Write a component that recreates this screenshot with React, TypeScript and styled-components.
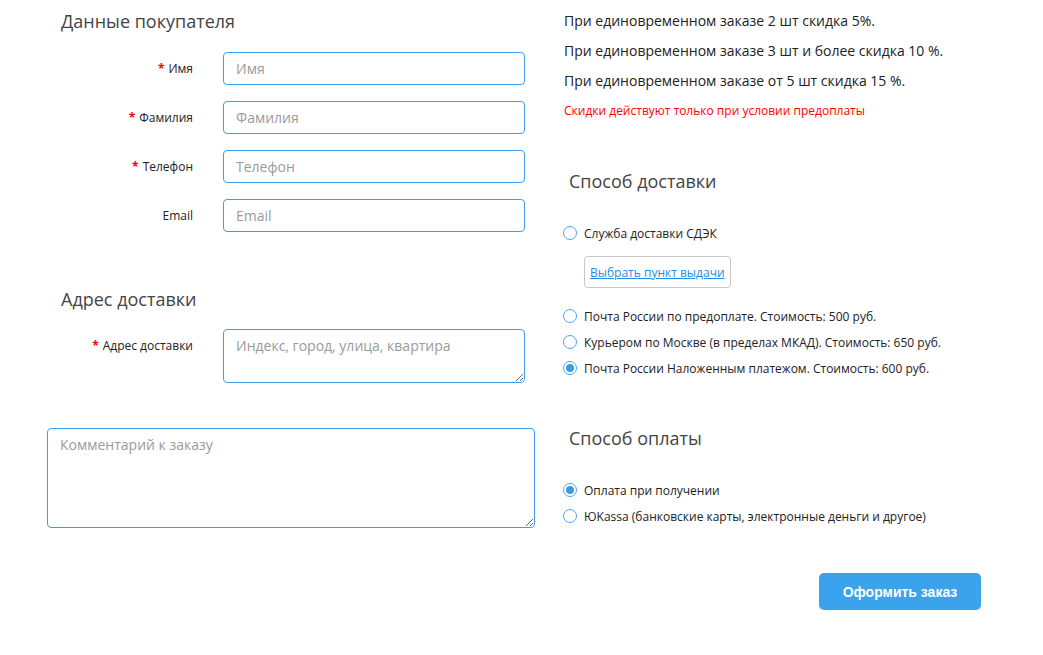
import styled, { createGlobalStyle } from 'styled-components'

const GlobalStyle = createGlobalStyle`
    body {
        margin: 0;
        background: #fff;
        font-family: "Open Sans", "Liberation Sans", sans-serif;
        color: #222;
    }
`

const Page = styled.div`
    display: grid;
    grid-template-columns: 488px 418px;
    column-gap: 28px;
    padding-left: 47px;
`

const Column = styled.div`
    display: flex;
    flex-direction: column;
`

const Heading = styled.h2<{ $top: number; $indent: number }>`
    margin: ${p => p.$top}px 0 0;
    padding-left: ${p => p.$indent}px;
    font-size: 18px;
    line-height: 24px;
    font-weight: 400;
    color: #444;
`

const Fields = styled.div<{ $top: number }>`
    display: flex;
    flex-direction: column;
    gap: 16px;
    margin-top: ${p => p.$top}px;
`

const Row = styled.div`
    display: grid;
    grid-template-columns: 146px 302px;
    column-gap: 30px;
    align-items: start;
`

const Label = styled.label`
    text-align: right;
    font-size: 12px;
    line-height: 17px;
    padding-top: 8px;
    color: #222;
`

const Star = styled.span`
    color: #f00;
    font-weight: 700;
    margin-right: 4px;
`

const fieldBase = `
    box-sizing: border-box;
    width: 100%;
    border: 1px solid #3d9fec;
    border-radius: 4px;
    font-family: "Open Sans", "Liberation Sans", sans-serif;
    font-size: 14px;
    color: #222;
    outline: none;
    background: #fff;
    &::placeholder { color: #9a9a9a; }
`

const Input = styled.input`
    ${fieldBase}
    height: 33px;
    padding: 0 12px;
`

const TextArea = styled.textarea<{ $h: number }>`
    ${fieldBase}
    height: ${p => p.$h}px;
    padding: 6px 12px;
    line-height: 19px;
    display: block;
    resize: vertical;
`

const Comment = styled(TextArea)`
    margin-top: 45px;
`

const Notes = styled.div`
    margin-top: 6px;
`

const Note = styled.p`
    margin: 0;
    font-size: 14px;
    line-height: 30px;
    color: #222;
    padding-left: 1px;
`

const Warning = styled.p`
    margin: 0;
    font-size: 12px;
    line-height: 30px;
    color: #f00;
    padding-left: 1px;
`

const Options = styled.div<{ $top: number }>`
    display: flex;
    flex-direction: column;
    margin-top: ${p => p.$top}px;
`

const Option = styled.label`
    display: flex;
    align-items: center;
    gap: 7px;
    height: 26px;
    font-size: 12px;
    color: #222;
`

const Radio = styled.span<{ $checked?: boolean }>`
    box-sizing: border-box;
    width: 14px;
    height: 14px;
    border-radius: 50%;
    border: 1px solid #4ba6ef;
    display: flex;
    align-items: center;
    justify-content: center;
    flex: none;

    &::after {
        content: '';
        width: 8px;
        height: 8px;
        border-radius: 50%;
        background: ${p => (p.$checked ? '#3a9be9' : 'transparent')};
    }
`

const PickupBox = styled.div`
    margin: 10px 0 15px 21px;
    align-self: flex-start;
    box-sizing: border-box;
    height: 32px;
    padding: 0 5px;
    border: 1px solid #c8c8c8;
    border-radius: 4px;
    display: flex;
    align-items: center;
`

const PickupLink = styled.a`
    font-size: 12px;
    color: #1f8ee6;
    text-decoration: underline;
    cursor: pointer;
`

const Submit = styled.button`
    align-self: flex-end;
    margin-top: 44px;
    width: 162px;
    height: 37px;
    border: none;
    border-radius: 5px;
    background: #3ba2ec;
    color: #fff;
    font-family: "Liberation Sans", Arial, sans-serif;
    font-weight: 700;
    font-size: 14px;
    cursor: pointer;
`

const buyerFields = [
    { name: 'Имя', required: true },
    { name: 'Фамилия', required: true },
    { name: 'Телефон', required: true },
    { name: 'Email', required: false },
]

const delivery = [
    'Почта России по предоплате. Стоимость: 500 руб.',
    'Курьером по Москве (в пределах МКАД). Стоимость: 650 руб.',
    'Почта России Наложенным платежом. Стоимость: 600 руб.',
]

const App = () => {
    return (
        <>
            <GlobalStyle />
            <Page>
                <Column>
                    <Heading $top={9} $indent={14}>Данные покупателя</Heading>
                    <Fields $top={19}>
                        {buyerFields.map(f => (
                            <Row key={f.name}>
                                <Label>
                                    {f.required && <Star>*</Star>}
                                    {f.name}
                                </Label>
                                <Input placeholder={f.name} />
                            </Row>
                        ))}
                    </Fields>
                    <Heading $top={55} $indent={14}>Адрес доставки</Heading>
                    <Fields $top={18}>
                        <Row>
                            <Label>
                                <Star>*</Star>Адрес доставки
                            </Label>
                            <TextArea $h={54} placeholder="Индекс, город, улица, квартира" />
                        </Row>
                    </Fields>
                    <Comment $h={100} placeholder="Комментарий к заказу" />
                </Column>

                <Column>
                    <Notes>
                        <Note>При единовременном заказе 2 шт скидка 5%.</Note>
                        <Note>При единовременном заказе 3 шт и более скидка 10 %.</Note>
                        <Note>При единовременном заказе от 5 шт скидка 15 %.</Note>
                        <Warning>Скидки действуют только при условии предоплаты</Warning>
                    </Notes>

                    <Heading $top={43} $indent={6}>Способ доставки</Heading>
                    <Options $top={27}>
                        <Option>
                            <Radio />
                            Служба доставки СДЭК
                        </Option>
                        <PickupBox>
                            <PickupLink>Выбрать пункт выдачи</PickupLink>
                        </PickupBox>
                        {delivery.map((d, i) => (
                            <Option key={d}>
                                <Radio $checked={i === 2} />
                                {d}
                            </Option>
                        ))}
                    </Options>

                    <Heading $top={45} $indent={6}>Способ оплаты</Heading>
                    <Options $top={27}>
                        <Option>
                            <Radio $checked />
                            Оплата при получении
                        </Option>
                        <Option>
                            <Radio />
                            ЮKassa (банковские карты, электронные деньги и другое)
                        </Option>
                    </Options>

                    <Submit>Оформить заказ</Submit>
                </Column>
            </Page>
        </>
    )
}

export default App
